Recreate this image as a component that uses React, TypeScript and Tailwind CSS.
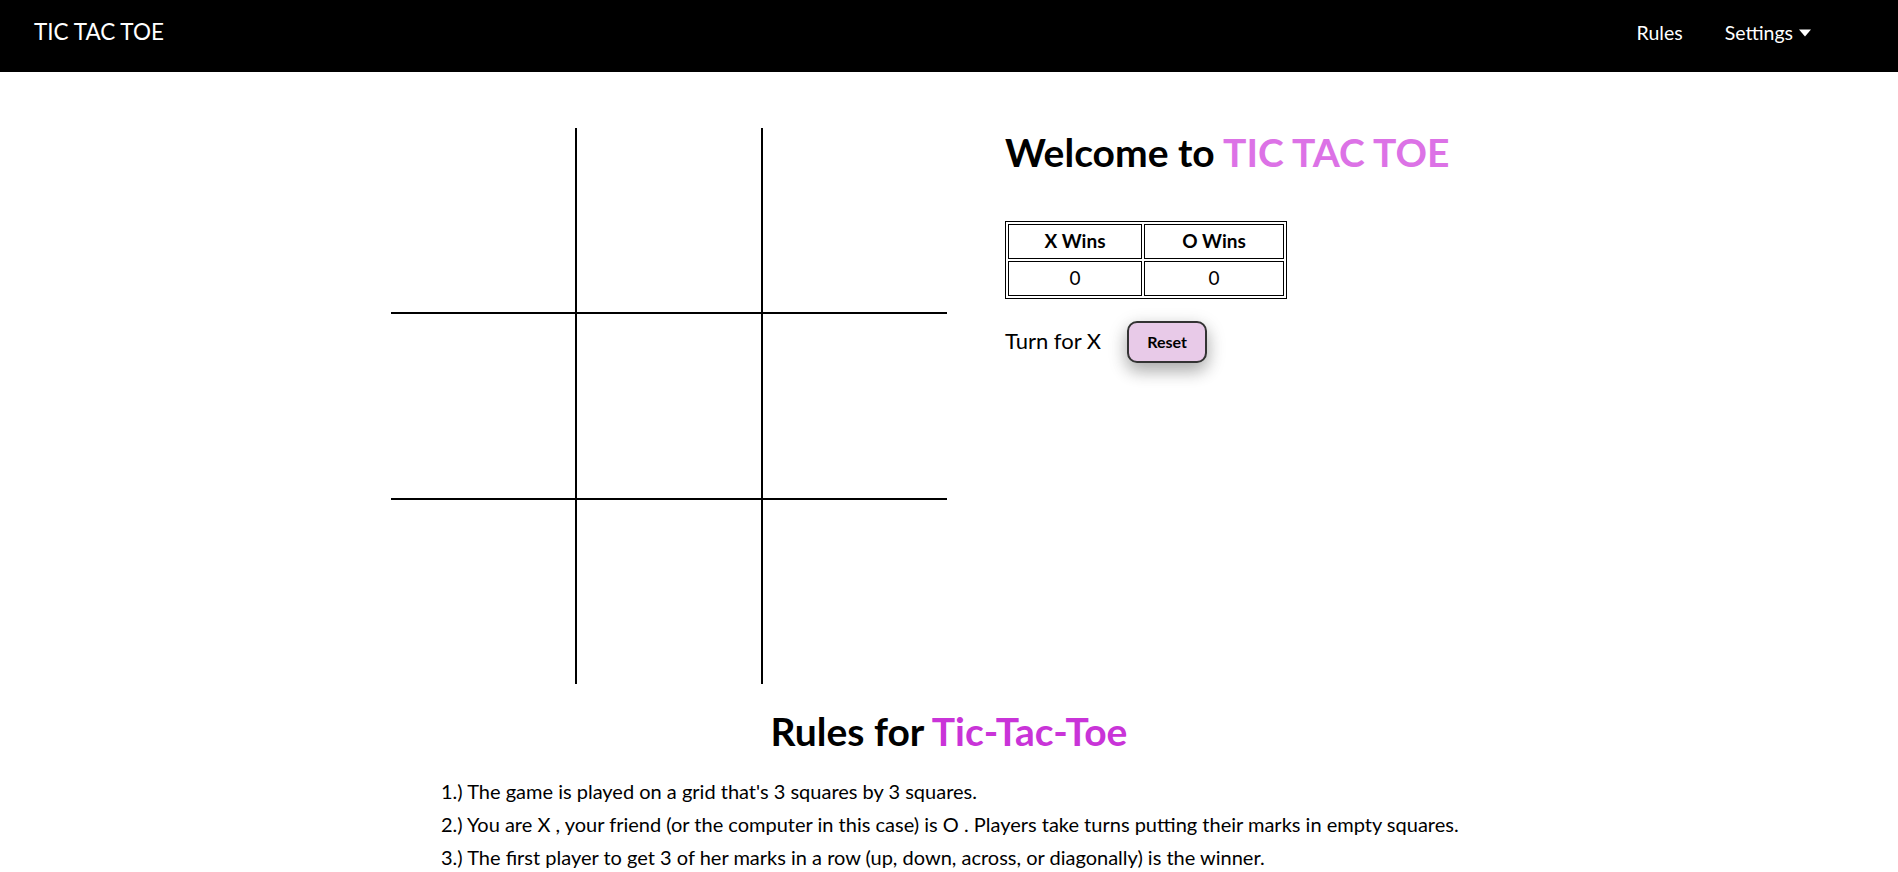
// App.tsx
import React from 'react';

const font = { fontFamily: 'Lato, "Noto Sans", sans-serif' };

function Board() {
  const cells = Array.from({ length: 9 }, (_, i) => i);
  return (
    <div className="grid grid-cols-[186px_186px_184px] grid-rows-[186px_186px_184px] w-[556px] h-[556px] shrink-0">
      {cells.map((i) => {
        const col = i % 3;
        const row = Math.floor(i / 3);
        return (
          <div
            key={i}
            className={
              (col < 2 ? 'border-r-2 ' : '') +
              (row < 2 ? 'border-b-2 ' : '') +
              'border-black bg-white'
            }
          />
        );
      })}
    </div>
  );
}

export default function App() {
  return (
    <div className="min-h-screen bg-white text-black" style={font}>
      {/* Navbar */}
      <nav className="h-[72px] bg-black text-white flex justify-between items-start">
        <div className="pl-[34px] pt-[19px] text-[22.5px] leading-[26px] whitespace-nowrap">TIC TAC TOE</div>
        <div className="flex items-start gap-[42px] pr-[86px] pt-[21px] text-[19.5px] leading-[23px] whitespace-nowrap">
          <span>Rules</span>
          <span className="flex items-center gap-[5px]">
            Settings
            <svg width="14" height="8" viewBox="0 0 14 8" className="mt-[1px]">
              <path d="M1 0.5 L13 0.5 L7 7.5 Z" fill="white" />
            </svg>
          </span>
        </div>
      </nav>

      {/* Game */}
      <section className="flex justify-center items-start gap-[58px] mt-[56px]">
        <Board />
        <div className="w-[502px] shrink-0">
          <h1 className="text-[39px] leading-[47px] font-bold mt-[1px]">
            Welcome to <span className="text-[#dc72e6]">TIC TAC TOE</span>
          </h1>
          <table className="mt-[45px] border border-black border-separate border-spacing-[2px] text-[19px]">
            <thead>
              <tr>
                <th className="border border-black w-[134px] h-[35px] font-bold">X Wins</th>
                <th className="border border-black w-[140px] h-[35px] font-bold">O Wins</th>
              </tr>
            </thead>
            <tbody>
              <tr>
                <td className="border border-black h-[35px] text-center">0</td>
                <td className="border border-black h-[35px] text-center">0</td>
              </tr>
            </tbody>
          </table>
          <div className="flex items-center mt-[22px]">
            <span className="text-[22px] leading-[26px] -mt-[2px]">Turn for X</span>
            <button className="ml-[26px] w-[80px] h-[42px] rounded-[10px] border-2 border-[#333] bg-[#e8cae8] text-[16px] font-bold shadow-[0_8px_16px_0_rgba(0,0,0,0.2),0_6px_20px_0_rgba(0,0,0,0.19)]">
              Reset
            </button>
          </div>
        </div>
      </section>

      {/* Rules */}
      <section className="mt-[24px]">
        <h2 className="text-[39px] leading-[47px] font-bold text-center">
          Rules for <span className="text-[#c934d8]">Tic-Tac-Toe</span>
        </h2>
        <div className="mt-[20px] pl-[441px] text-[20px] leading-[33px]">
          <div>1.) The game is played on a grid that's 3 squares by 3 squares.</div>
          <div>2.) You are X , your friend (or the computer in this case) is O . Players take turns putting their marks in empty squares.</div>
          <div>3.) The first player to get 3 of her marks in a row (up, down, across, or diagonally) is the winner.</div>
          <div>4.) When all 9 squares are full, the game is over. If no player has 3 marks in a row, the game ends in a tie.</div>
        </div>
      </section>
    </div>
  );
}
